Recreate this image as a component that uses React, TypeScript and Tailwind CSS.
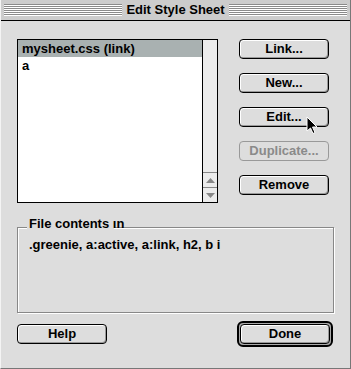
const Stripes = () => (
  <div className="flex-1 h-[12px] bg-[repeating-linear-gradient(to_bottom,#8a8a8a_0px,#8a8a8a_1px,#ffffff_1px,#ffffff_2px)]" />
);

const MacButton = ({ label, disabled = false }: { label: string; disabled?: boolean }) => (
  <div
    data-disabled={disabled}
    className="w-[90px] h-[20px] flex items-center justify-center rounded-[4px] border border-black bg-[#dddddd] shadow-[inset_1px_1px_0_#ffffff,inset_-1px_-1px_0_#999999] data-[disabled=true]:border-[#999999] data-[disabled=true]:text-[#8a8a8a] data-[disabled=true]:shadow-none leading-[18px]"
  >
    {label}
  </div>
);

export default function App() {
  return (
    <div className="relative w-[351px] h-[369px] bg-[#dddddd] text-[13px] font-bold text-black font-['Liberation_Sans',Arial,sans-serif] border-r border-b border-[#777777] border-l border-l-[#f4f4f4] overflow-hidden">
      {/* title bar */}
      <div className="h-[21px] flex items-center pl-[3px] pr-[3px] gap-[3px] bg-[#cccccc] border-b border-black">
        <Stripes />
        <div className="leading-[20px] px-[1px]">Edit Style Sheet</div>
        <Stripes />
      </div>

      {/* body */}
      <div className="flex flex-col pl-[16px] pt-[18px]">
        <div className="flex">
          {/* list */}
          <div className="w-[201px] h-[164px] border border-black bg-white flex">
            <div className="flex-1 flex flex-col">
              <div className="h-[17px] leading-[17px] pl-[4px] bg-[#a9b1b1]">mysheet.css (link)</div>
              <div className="h-[17px] leading-[17px] pl-[4px]">a</div>
            </div>
            <div className="w-[15px] border-l border-black bg-[#ececec] flex flex-col justify-end">
              <div className="h-[15px] border-t border-[#888888] flex items-center justify-center">
                <svg width="9" height="5" viewBox="0 0 9 5"><polygon points="4.5,0 9,5 0,5" fill="#888888" /></svg>
              </div>
              <div className="h-[15px] border-t border-[#888888] flex items-center justify-center">
                <svg width="9" height="5" viewBox="0 0 9 5"><polygon points="0,0 9,0 4.5,5" fill="#888888" /></svg>
              </div>
            </div>
          </div>
          {/* buttons */}
          <div className="ml-[21px] flex flex-col gap-[14px]">
            <MacButton label="Link..." />
            <MacButton label="New..." />
            <MacButton label="Edit..." />
            <MacButton label="Duplicate..." disabled />
            <MacButton label="Remove" />
          </div>
        </div>

        {/* file contents group */}
        <div className="relative mt-[24px] w-[317px] h-[86px] border border-[#888888] shadow-[inset_1px_1px_0_#ffffff,1px_1px_0_#ffffff] pl-[11px] pt-[9px]">
          <span className="absolute -top-[11px] left-[9px] w-[87px] pl-[2px] bg-[#dddddd] leading-[13px] whitespace-nowrap">
            File contents ın
          </span>
          <div className="leading-[15px]">.greenie, a:active, a:link, h2, b i</div>
        </div>

        {/* bottom buttons */}
        <div className="mt-[11px] w-[317px] flex items-start justify-between">
          <MacButton label="Help" />
          <div className="-mt-[3px] mr-[1px] w-[96px] h-[26px] rounded-[6px] border-2 border-black bg-[#aaaaaa] flex items-center justify-center">
            <MacButton label="Done" />
          </div>
        </div>
      </div>

      {/* cursor */}
      <svg className="absolute left-[305px] top-[116px]" width="13" height="19" viewBox="0 0 13 19">
        <polygon points="1,1 1,15 4.5,12 7,17.5 9,16.5 6.5,11 11,11" fill="black" stroke="white" strokeWidth="1" />
      </svg>
    </div>
  );
}
